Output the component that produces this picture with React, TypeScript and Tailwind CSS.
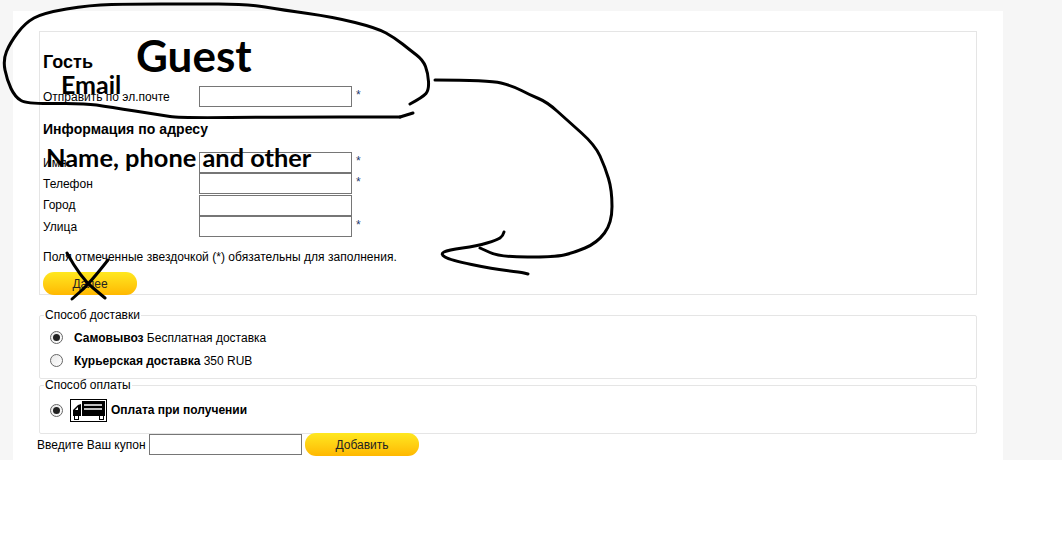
const arial = "font-['Liberation_Sans',Arial,sans-serif]";
const handFont = "font-['Lato','Open_Sans',sans-serif]";

function TextRow({ label, star }: { label: string; star?: boolean }) {
  return (
    <div className="flex h-[21.33px] items-center">
      <label className="w-[156px] shrink-0">{label}</label>
      <input className="h-[21px] w-[153px] border border-[#767676] bg-white" />
      {star && <span className="ml-[4px] -mt-[3px] text-[#1f3a6e]">*</span>}
    </div>
  );
}

function YellowButton({ title, className }: { title: string; className: string }) {
  return (
    <button className={"h-[23px] shrink-0 rounded-[11px] bg-gradient-to-b from-[#ffe81f] to-[#ffb800] text-center text-[12px] text-[#222] " + className}>
      {title}
    </button>
  );
}

function Radio({ checked }: { checked?: boolean }) {
  return (
    <span className="flex h-[13px] w-[13px] shrink-0 items-center justify-center rounded-full border border-[#666] bg-gradient-to-br from-[#e8e8e8] to-white">
      {checked && <span className="h-[7px] w-[7px] rounded-full bg-[#222]" />}
    </span>
  );
}

function CodIcon() {
  return (
    <svg width="37" height="23" viewBox="0 0 37 23" className="shrink-0">
      <rect x="0.5" y="0.5" width="36" height="22" fill="#fff" stroke="#000" />
      <rect x="12" y="2" width="23" height="15" fill="#000" />
      <path d="M14 6h18M14 10h18" stroke="#fff" strokeWidth="1.5" />
      <path d="M3 11l5-5 3-1v12H3z" fill="#000" />
      <path d="M5 11l3-3v3z" fill="#fff" />
      <rect x="4.5" y="16.5" width="4" height="4" fill="#fff" stroke="#000" />
      <rect x="29.5" y="16.5" width="4" height="4" fill="#fff" stroke="#000" />
    </svg>
  );
}

// rounds off the corners between the points of a pen stroke
function smooth(points: number[][]) {
  let d = `M${points[0][0]} ${points[0][1]}`;
  for (let i = 1; i < points.length - 1; i++) {
    const [x, y] = points[i];
    const [nx, ny] = points[i + 1];
    d += `Q${x} ${y} ${(x + nx) / 2} ${(y + ny) / 2}`;
  }
  const last = points[points.length - 1];
  return d + `L${last[0]} ${last[1]}`;
}

const strokes = [
  [[410, 104], [423, 97], [429, 90], [428, 73], [423, 60], [410, 50], [395, 38], [377, 28], [333, 17], [283, 10], [247, 4], [190, 4], [133, 4], [90, 5], [43, 13], [25, 23], [10, 43], [3, 60], [7, 80], [15, 97], [27, 104], [83, 103], [110, 107], [160, 115], [180, 118], [280, 117], [400, 117]],
  [[400, 117], [413, 113]],
  [[435, 80], [489, 80], [513, 86], [530, 95], [547, 102], [567, 120], [595, 145], [605, 167], [612, 190], [612, 223], [597, 243], [573, 253], [555, 257], [500, 257], [480, 248]],
  [[504, 232], [503, 236], [497, 240], [477, 246], [448, 250], [440, 254], [450, 260], [493, 269], [520, 272], [528, 274]],
  [[67, 253], [80, 277], [105, 298]],
  [[108, 260], [90, 283], [72, 299]],
];

// hand drawn marks on top of the screenshot
function Scribbles() {
  return (
    <svg width="1062" height="540" viewBox="0 0 1062 540" className="pointer-events-none absolute left-0 top-0">
      {strokes.map((points, index) => (
        <path
          key={index}
          d={smooth(points)}
          className="fill-none stroke-black stroke-[3px] [stroke-linecap:round] [stroke-linejoin:round]"
        />
      ))}
    </svg>
  );
}

export default function App() {
  return (
    <div className={"relative h-[540px] w-[1062px] overflow-hidden bg-white text-[12px] leading-[14px] text-black " + arial}>
      <div className="h-[460px] bg-[#f6f6f6] pl-[13px] pt-[11px]">
        <div className="h-[449px] w-[990px] bg-white px-[26px] pt-[20px]">
          <div className="h-[264px] w-[938px] border border-[#e5e5e5] px-[3px] pt-[21px]">
            <h2 className="text-[18px] font-bold leading-[18px]">Гость</h2>
            <div className="mt-[15px] flex h-[21px] items-center">
              <label className="w-[156px] shrink-0">Отправить по эл.почте</label>
              <input className="h-[21px] w-[153px] border border-[#767676] bg-white" />
              <span className="ml-[4px] -mt-[3px] text-[#1f3a6e]">*</span>
            </div>
            <h3 className="mt-[14px] text-[14px] font-bold leading-[16px] tracking-[0.05px]">Информация по адресу</h3>
            <div className="mt-[15px]">
              <TextRow label="Имя" star />
              <TextRow label="Телефон" star />
              <TextRow label="Город" />
              <TextRow label="Улица" star />
            </div>
            <p className="mt-[13px] tracking-[0.035px]">Поля отмеченные звездочкой (*) обязательны для заполнения.</p>
            <YellowButton title="Далее" className="mt-[8px] w-[94px]" />
          </div>

          <fieldset className="mt-[13px] h-[71px] w-[938px] rounded-[2px] border border-[#e5e5e5] px-[10px]">
            <legend className="-ml-[6px] px-px">Способ доставки</legend>
            <div className="pt-[4px]">
              <div className="flex h-[23px] items-center gap-[11px]">
                <Radio checked />
                <span><b>Самовывоз</b> Бесплатная доставка</span>
              </div>
              <div className="flex h-[23px] items-center gap-[11px]">
                <Radio />
                <span><b>Курьерская доставка</b> 350 RUB</span>
              </div>
            </div>
          </fieldset>

          <fieldset className="-mt-[1px] h-[56px] w-[938px] rounded-[2px] border border-[#e5e5e5] px-[10px]">
            <legend className="-ml-[6px] px-px">Способ оплаты</legend>
            <div className="flex items-center pt-[7px]">
              <Radio checked />
              <span className="ml-[7px]"><CodIcon /></span>
              <b className="mb-[2px] ml-[4px]">Оплата при получении</b>
            </div>
          </fieldset>

          <div className="-ml-[2px] flex h-[21px] items-center">
            <label className="w-[112px] shrink-0">Введите Ваш купон</label>
            <input className="h-[21px] w-[153px] border border-[#767676] bg-white" />
            <YellowButton title="Добавить" className="ml-[3px] w-[114px]" />
          </div>
        </div>
      </div>

      <Scribbles />
      <span className={"absolute left-[136px] top-[28px] text-[44px] font-bold leading-[54px] " + handFont}>Guest</span>
      <span className={"absolute left-[61px] top-[68px] text-[25px] font-bold leading-[32px] " + handFont}>Email</span>
      <span className={"absolute left-[46px] top-[141px] text-[25.4px] font-bold leading-[32px] " + handFont}>Name, phone and other</span>
    </div>
  );
}
